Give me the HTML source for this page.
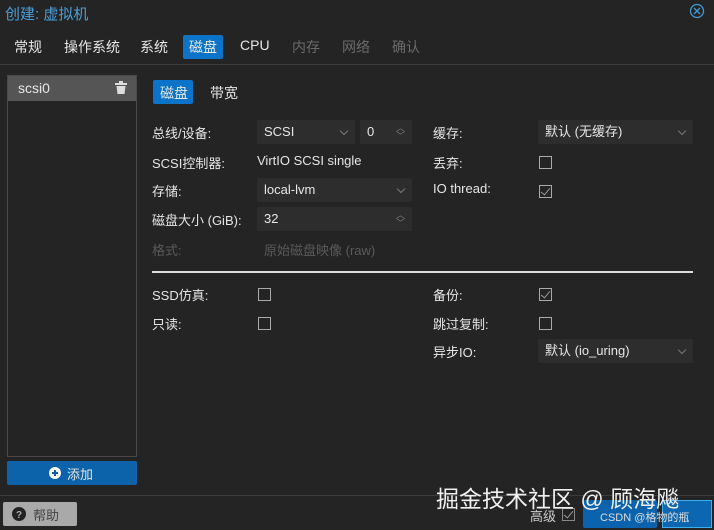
<!DOCTYPE html>
<html><head><meta charset="utf-8"><style>
*{margin:0;padding:0;box-sizing:border-box}
body{width:714px;height:530px;background:#242424;font-family:"Liberation Sans","Noto Sans CJK SC",sans-serif;font-size:13px;color:#e6e6e6;position:relative;overflow:hidden}
.a{position:absolute;white-space:nowrap}
.title{left:5px;top:3px;font-size:15px;color:#4a9fd8}
.tab{top:37px;font-size:14px;color:#e6e6e6}
.dis{color:#6a6a6a}
.fld{position:absolute;height:24px;background:#2d2d2d;border-radius:2px;padding:0 7px;line-height:24px;color:#e6e6e6}
.cb{position:absolute;width:13px;height:13px;border:1px solid #aaa}
.chk::after{content:"";position:absolute;left:3px;top:0px;width:4px;height:8px;border:solid #999;border-width:0 1px 1px 0;transform:rotate(40deg)}
.dd{position:absolute;right:8px;top:8px;width:6px;height:6px;border:solid #777;border-width:0 1px 1px 0;transform:rotate(45deg)}
.sp{position:absolute;right:7px;top:4px;color:#777;font-size:9px;line-height:8px}
</style></head><body>
<div class="a title">创建: 虚拟机</div>
<svg class="a" style="left:689px;top:3px" width="16" height="16"><circle cx="8" cy="8" r="6.5" fill="none" stroke="#3f9ad4" stroke-width="1.3"/><path d="M5 5L11 11M11 5L5 11" stroke="#3f9ad4" stroke-width="1.3"/></svg>
<div class="a tab" style="left:14px">常规</div>
<div class="a tab" style="left:64px">操作系统</div>
<div class="a tab" style="left:140px">系统</div>
<div class="a" style="left:183px;top:35px;width:40px;height:24px;background:#0b74c8;border-radius:2px"></div>
<div class="a tab" style="left:189px">磁盘</div>
<div class="a tab" style="left:240px">CPU</div>
<div class="a tab dis" style="left:292px">内存</div>
<div class="a tab dis" style="left:342px">网络</div>
<div class="a tab dis" style="left:392px">确认</div>
<div class="a" style="left:0;top:64px;width:714px;height:1px;background:#3c3c3c"></div>

<div class="a" style="left:7px;top:75px;width:130px;height:382px;border:1px solid #4a4a4a"></div>
<div class="a" style="left:8px;top:76px;width:128px;height:25px;background:#555"></div>
<div class="a" style="left:18px;top:80px;font-size:14px">scsi0</div>
<svg class="a" style="left:115px;top:81px" width="12" height="14"><rect x="0" y="2" width="12" height="2" fill="#ddd"/><rect x="4" y="0" width="4" height="2" fill="#ddd"/><path d="M1.5 5h9l-1 8h-7z" fill="#ddd"/></svg>
<div class="a" style="left:7px;top:461px;width:130px;height:24px;background:#0d63aa;border-radius:2px"></div>
<svg class="a" style="left:49px;top:467px" width="12" height="12"><circle cx="6" cy="6" r="6" fill="#fff"/><path d="M6 3v6M3 6h6" stroke="#0d63aa" stroke-width="2"/></svg>
<div class="a" style="left:67px;top:464px">添加</div>

<div class="a" style="left:153px;top:80px;width:40px;height:24px;background:#0b74c8;border-radius:2px"></div>
<div class="a" style="left:160px;top:83px;font-size:14px">磁盘</div>
<div class="a" style="left:210px;top:83px;font-size:14px">带宽</div>

<div class="a" style="left:152px;top:123px">总线/设备:</div>
<div class="fld" style="left:257px;top:120px;width:98px">SCSI<div class="dd"></div></div>
<div class="fld" style="left:360px;top:120px;width:52px">0<div class="sp">︿<br>﹀</div></div>
<div class="a" style="left:152px;top:153px">SCSI控制器:</div>
<div class="a" style="left:257px;top:153px">VirtIO SCSI single</div>
<div class="a" style="left:152px;top:181px">存储:</div>
<div class="fld" style="left:257px;top:178px;width:155px">local-lvm<div class="dd"></div></div>
<div class="a" style="left:152px;top:210px">磁盘大小 (GiB):</div>
<div class="fld" style="left:257px;top:207px;width:155px">32<div class="sp">︿<br>﹀</div></div>
<div class="a dis" style="left:152px;top:240px;color:#5a5a5a">格式:</div>
<div class="a" style="left:264px;top:240px;color:#5a5a5a">原始磁盘映像 (raw)</div>

<div class="a" style="left:433px;top:123px">缓存:</div>
<div class="fld" style="left:538px;top:120px;width:155px">默认 (无缓存)<div class="dd"></div></div>
<div class="a" style="left:433px;top:153px">丢弃:</div>
<div class="cb" style="left:539px;top:156px"></div>
<div class="a" style="left:433px;top:181px">IO thread:</div>
<div class="cb chk" style="left:539px;top:185px"></div>

<div class="a" style="left:152px;top:271px;width:541px;height:2px;background:#ddd"></div>

<div class="a" style="left:152px;top:285px">SSD仿真:</div>
<div class="cb" style="left:258px;top:288px"></div>
<div class="a" style="left:152px;top:314px">只读:</div>
<div class="cb" style="left:258px;top:317px"></div>
<div class="a" style="left:433px;top:285px">备份:</div>
<div class="cb chk" style="left:539px;top:288px"></div>
<div class="a" style="left:433px;top:314px">跳过复制:</div>
<div class="cb" style="left:539px;top:317px"></div>
<div class="a" style="left:433px;top:342px">异步IO:</div>
<div class="fld" style="left:538px;top:339px;width:155px">默认 (io_uring)<div class="dd"></div></div>

<div class="a" style="left:0;top:495px;width:714px;height:1px;background:#3c3c3c"></div>
<div class="a" style="left:3px;top:502px;width:74px;height:24px;background:#a9a9a9;border-radius:2px"></div>
<svg class="a" style="left:12px;top:507px" width="14" height="14"><circle cx="7" cy="7" r="7" fill="#222"/><text x="7" y="11" font-size="10" font-weight="bold" fill="#a9a9a9" text-anchor="middle" font-family="Liberation Sans">?</text></svg>
<div class="a" style="left:33px;top:505px;color:#444">帮助</div>
<div class="a" style="left:583px;top:500px;width:74px;height:28px;background:#0b63ae;border-radius:2px"></div>
<div class="a" style="left:662px;top:500px;width:50px;height:28px;border:1px solid #3ab0f0;background:#0d66b0"></div>
<div class="a" style="left:530px;top:506px;color:#ccc">高级</div>
<div class="cb chk" style="left:562px;top:508px;border-color:#888"></div>
<div class="a" style="left:600px;top:509px;font-size:11px;color:#ddd">CSDN @格物的瓶</div>
<div class="a" style="left:436px;top:480px;font-size:23px;color:#f0f0f0">掘金技术社区 @ 顾海飚</div>
</body></html>
